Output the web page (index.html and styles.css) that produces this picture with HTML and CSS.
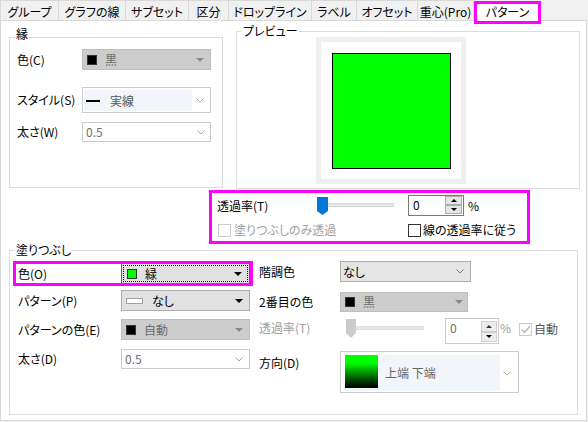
FILE: index.html
```html
<!DOCTYPE html>
<html lang="ja">
<head>
<meta charset="utf-8">
<link rel="stylesheet" href="styles.css">
</head>
<body>
<div class="tabs">
  <div class="tab">グループ</div>
  <div class="tab">グラフの線</div>
  <div class="tab">サブセット</div>
  <div class="tab">区分</div>
  <div class="tab">ドロップライン</div>
  <div class="tab">ラベル</div>
  <div class="tab">オフセット</div>
  <div class="tab">重心(Pro)</div>
  <div class="tab tab-active">パターン</div>
</div>
<div class="panel">
  <div class="top-row">
    <div class="group group-edge">
      <span class="legend legend-high">縁</span>
      <div class="row row-c">
        <span class="lbl">色(C)</span>
        <div class="dd dd-disabled dd-edge"><span class="sw sw-black"></span><span class="dd-text muted">黒</span><span class="tri tri-grey"></span></div>
      </div>
      <div class="row row-s">
        <span class="lbl">スタイル(S)</span>
        <div class="combo combo-style">
          <div class="combo-hl"><span class="line-sample"></span><span class="style-text">実線</span></div>
          <svg class="chev" width="8" height="5" viewBox="0 0 8 5"><path d="M0.5 0.5 L4 4 L7.5 0.5" fill="none" stroke="#a8a8a8"/></svg>
        </div>
      </div>
      <div class="row row-w">
        <span class="lbl">太さ(W)</span>
        <div class="combo combo-edge"><span class="muted">0.5</span>
          <svg class="chev" width="8" height="5" viewBox="0 0 8 5"><path d="M0.5 0.5 L4 4 L7.5 0.5" fill="none" stroke="#a8a8a8"/></svg>
        </div>
      </div>
    </div>
    <div class="group group-preview">
      <span class="legend">プレビュー</span>
      <div class="preview-frame"><div class="preview-fill"></div></div>
    </div>
  </div>

  <div class="trans-box">
    <div class="trans-row">
      <span class="trans-lbl">透過率(T)</span>
      <svg class="slider" width="77" height="21" viewBox="0 0 77 21">
        <rect x="0.5" y="8.5" width="76" height="3" fill="#e7e7e7" stroke="#d6d6d6"/>
        <path d="M0 2 H11 V16 L5.5 20 L0 16 Z" fill="#0078d7"/>
      </svg>
      <div class="spin">
        <span class="spin-val">0</span>
        <div class="spin-btns">
          <span class="spin-btn"><span class="arr-up"></span></span>
          <span class="spin-btn"><span class="arr-down"></span></span>
        </div>
      </div>
      <span class="pct">%</span>
    </div>
    <div class="check-row">
      <span class="check check-wide disabled"><span class="cb cb-disabled"></span><span class="check-text">塗りつぶしのみ透過</span></span>
      <span class="check"><span class="cb"></span><span class="check-text check-text-tight">線の透過率に従う</span></span>
    </div>
  </div>

  <div class="group group-fill">
    <span class="legend">塗りつぶし</span>
    <div class="fill-left">
      <div class="frow frow-color">
        <span class="flbl">色(O)</span>
        <div class="dd dd-focus">
          <div class="focus-rect"><span class="sw sw-green"></span><span class="dd-text">緑</span><span class="tri"></span></div>
        </div>
      </div>
      <div class="frow frow-pattern">
        <span class="flbl">パターン(P)</span>
        <div class="dd dd-fill"><span class="sw-pattern"></span><span class="dd-text pattern-text">なし</span><span class="tri"></span></div>
      </div>
      <div class="frow frow-pcolor">
        <span class="flbl">パターンの色(E)</span>
        <div class="dd dd-disabled dd-fill"><span class="sw sw-black"></span><span class="dd-text muted">自動</span><span class="tri tri-grey"></span></div>
      </div>
      <div class="frow frow-width">
        <span class="flbl">太さ(D)</span>
        <div class="combo combo-fill"><span class="muted">0.5</span>
          <svg class="chev" width="8" height="5" viewBox="0 0 8 5"><path d="M0.5 0.5 L4 4 L7.5 0.5" fill="none" stroke="#a8a8a8"/></svg>
        </div>
      </div>
    </div>
    <div class="fill-right">
      <div class="rrow rrow-grad">
        <span class="rlbl">階調色</span>
        <div class="dd dd-grad"><span class="dd-text grad-text">なし</span>
          <svg class="chev chev-grad" width="8" height="5" viewBox="0 0 8 5"><path d="M0.5 0.5 L4 4 L7.5 0.5" fill="none" stroke="#808080"/></svg>
        </div>
      </div>
      <div class="rrow rrow-second">
        <span class="rlbl">2番目の色</span>
        <div class="dd dd-disabled dd-second"><span class="sw sw-black"></span><span class="dd-text muted second-text">黒</span><span class="tri tri-grey"></span></div>
      </div>
      <div class="rrow rrow-trans">
        <span class="rlbl rlbl-trans disabled">透過率(T)</span>
        <svg class="slider slider-dis" width="78" height="20" viewBox="0 0 78 20">
          <rect x="0.5" y="7.5" width="77" height="3" fill="#e7e7e7" stroke="#dcdcdc"/>
          <path d="M0 0 H10 V14 L5 19 L0 14 Z" fill="#cccccc"/>
        </svg>
        <div class="spin spin-dis">
          <span class="spin-val muted">0</span>
          <div class="spin-btns">
            <span class="spin-btn"><span class="arr-up arr-grey"></span></span>
            <span class="spin-btn"><span class="arr-down"></span></span>
          </div>
        </div>
        <span class="pct pct-dis">%</span>
        <span class="cb cb-disabled cb-checked">
          <svg width="11" height="11" viewBox="0 0 11 11"><path d="M1.5 5.5 L4.5 8.5 L10 2" fill="none" stroke="#b4b4b4" stroke-width="1.2"/></svg>
        </span>
        <span class="auto-text">自動</span>
      </div>
      <div class="rrow rrow-dir">
        <span class="rlbl rlbl-dir">方向(D)</span>
        <div class="combo combo-dir">
          <div class="dir-hl"><span class="grad-sw"></span><span class="dir-text">上端 下端</span></div>
          <svg class="chev chev-dir" width="8" height="5" viewBox="0 0 8 5"><path d="M0.5 0.5 L4 4 L7.5 0.5" fill="none" stroke="#a8a8a8"/></svg>
        </div>
      </div>
    </div>
  </div>
</div>
</body>
</html>
```

FILE: styles.css
```css
* { box-sizing: border-box; }

body {
  margin: 0;
  width: 588px;
  height: 422px;
  overflow: hidden;
  background: #f0f0f0;
  font-family: "Noto Sans CJK JP", "Liberation Sans", sans-serif;
  font-size: 12px;
  line-height: 14px;
  color: #000;
  font-feature-settings: "palt" 1;
}

/* tabs */
.tabs {
  display: flex;
  height: 20px;
}
.tab {
  height: 20px;
  padding-top: 4px;
  border-top: 1px solid #d9d9d9;
  border-right: 1px solid #d9d9d9;
  background: #f0f0f0;
  text-align: center;
  white-space: nowrap;
}
.tab:nth-child(1) { width: 59px; border-left: 1px solid #d9d9d9; }
.tab:nth-child(2) { width: 67px; }
.tab:nth-child(3) { width: 63px; }
.tab:nth-child(4) { width: 40px; }
.tab:nth-child(5) { width: 83px; }
.tab:nth-child(6) { width: 45px; }
.tab:nth-child(7) { width: 61px; }
.tab:nth-child(8) { width: 56px; }
.tab-active {
  position: relative;
  z-index: 2;
  width: 67px;
  height: 23px;
  margin-top: 1px;
  padding-top: 1px;
  border: 3px solid #ff00ff;
  background: #fff;
}

/* main panel */
.panel {
  width: 587px;
  height: 401px;
  border: 1px solid #d9d9d9;
  background: #fff;
}

.top-row {
  display: flex;
  align-items: flex-start;
}

.group {
  position: relative;
  border: 1px solid #dcdcdc;
}
.legend {
  position: absolute;
  top: -8px;
  left: 5px;
  padding: 0 1px;
  background: #fff;
  white-space: nowrap;
}
.legend-high { top: -11px; }

.group-edge {
  margin-left: 8px;
  margin-top: 16px;
  width: 214px;
  height: 151px;
}
.group-preview {
  margin-left: 13px;
  margin-top: 10px;
  width: 344px;
  height: 158px;
}

.row {
  display: flex;
  align-items: center;
  padding-left: 7px;
}
.row-c { margin-top: 11px; height: 21px; }
.row-s { margin-top: 17px; height: 26px; }
.row-w { margin-top: 9px; height: 20px; }
.lbl { width: 65px; white-space: nowrap; }

/* dropdowns */
.dd {
  display: flex;
  align-items: center;
  height: 21px;
  border: 1px solid #adadad;
  background: #e1e1e1;
  padding-left: 4px;
}
.dd-disabled {
  background: #cccccc;
  border-color: #bfbfbf;
}
.dd-edge { width: 129px; }
.dd-text { margin-left: 8px; }
.muted { color: #6d6d6d; }
.disabled { color: #a0a0a0; }

.sw {
  width: 10px;
  height: 10px;
  flex: none;
}
.sw-black { background: #000; border: 1px solid #333; }
.sw-green { background: #00ff00; border: 1px solid #333; }
.sw-pattern {
  width: 17px;
  height: 6px;
  background: #fff;
  border: 1px solid #a0a0a0;
  flex: none;
}

.tri {
  margin-left: auto;
  margin-right: 6px;
  width: 0;
  height: 0;
  border-left: 4px solid transparent;
  border-right: 4px solid transparent;
  border-top: 4px solid #000;
}
.tri-grey { border-top-color: #8a8a8a; }

/* combos */
.combo {
  display: flex;
  align-items: center;
  border: 1px solid #cccccc;
  background: #fff;
}
.combo .chev { margin-left: auto; margin-right: 5px; flex: none; }
.combo-style {
  width: 129px;
  height: 26px;
  padding: 2px 1px 1px 1px;
  align-items: stretch;
}
.combo-style .chev { align-self: center; }
.combo-hl {
  width: 108px;
  display: flex;
  align-items: center;
  background: #f2f5fa;
}
.line-sample {
  width: 14px;
  height: 2px;
  margin-left: 2px;
  background: #000;
}
.style-text { margin-left: 10px; color: #555; }
.combo-edge {
  width: 129px;
  height: 20px;
  padding-left: 3px;
}

/* preview */
.preview-frame {
  margin-left: 79px;
  margin-top: 5px;
  width: 150px;
  height: 147px;
  border: 5px solid #efefef;
  padding: 11px 10px 10px 11px;
}
.preview-fill {
  width: 119px;
  height: 116px;
  background: #00ff00;
  border: 1px solid #000;
}

/* transparency box */
.trans-box {
  margin-left: 208px;
  margin-top: 1px;
  width: 321px;
  height: 54px;
  border: 3px solid #ff00ff;
}
.trans-row {
  display: flex;
  align-items: center;
  margin-top: 2px;
  height: 21px;
  padding-left: 5px;
}
.trans-lbl { width: 100px; }
.slider { flex: none; display: block; }

.spin {
  display: flex;
  margin-left: 14px;
  width: 56px;
  height: 21px;
  border: 1px solid #7a7a7a;
  background: #fff;
}
.spin-val {
  flex: 1;
  padding-left: 4px;
  line-height: 18px;
}
.spin-btns {
  display: flex;
  flex-direction: column;
  width: 17px;
  margin: 0 1px 1px 0;
}
.spin-btn {
  flex: 1;
  display: flex;
  align-items: center;
  justify-content: center;
  border: 1px solid #adadad;
  background: #e5e5e5;
}
.arr-up {
  width: 0; height: 0;
  border-left: 3px solid transparent;
  border-right: 3px solid transparent;
  border-bottom: 3px solid #000;
}
.arr-down {
  width: 0; height: 0;
  border-left: 3px solid transparent;
  border-right: 3px solid transparent;
  border-top: 3px solid #000;
}
.arr-grey { border-bottom-color: #333; }
.pct { margin-left: 4px; }

.check-row {
  display: flex;
  align-items: center;
  margin-top: 7px;
  height: 14px;
  padding-left: 6px;
}
.check { display: flex; align-items: center; }
.check-wide { width: 190px; }
.cb {
  width: 13px;
  height: 13px;
  border: 1px solid #333;
  background: #fff;
  flex: none;
}
.cb-disabled { border-color: #cccccc; }
.check-text { margin-left: 3px; }
.check-text-tight { margin-left: 2px; }

/* fill group */
.group-fill {
  display: flex;
  margin-left: 8px;
  margin-top: 6px;
  width: 569px;
  height: 165px;
}
.fill-left {
  width: 241px;
  padding-left: 5px;
  flex: none;
}
.frow {
  display: flex;
  align-items: center;
  width: 236px;
  padding-left: 3px;
}
.flbl { width: 103px; white-space: nowrap; }
.frow-color {
  margin-top: 12px;
  height: 21px;
  outline: 3px solid #ff00ff;
  outline-offset: -1px;
}
.frow-pattern { margin-top: 6px; height: 21px; }
.frow-pcolor { margin-top: 8px; height: 21px; }
.frow-width { margin-top: 9px; height: 20px; }

.dd-focus {
  width: 129px;
  border-color: #0078d7;
  background: #e1e1e1;
  padding: 1px;
}
.focus-rect {
  flex: 1;
  height: 17px;
  display: flex;
  align-items: center;
  border: 1px dotted #000;
  padding-left: 3px;
}
.focus-rect .tri { margin-right: 5px; }
.dd-fill { width: 129px; }
.pattern-text { margin-left: 9px; }
.combo-fill {
  width: 129px;
  height: 20px;
  padding-left: 3px;
}
.combo-fill .chev { margin-right: 6px; }

.fill-right {
  margin-left: 8px;
  width: 310px;
}
.rrow {
  display: flex;
  align-items: center;
}
.rlbl { width: 81px; white-space: nowrap; flex: none; }
.rrow-grad { margin-top: 10px; height: 21px; }
.rrow-second { margin-top: 10px; height: 20px; }
.rrow-trans { margin-top: 6px; height: 26px; }
.rrow-dir { margin-top: 7px; height: 42px; align-items: flex-start; }

.dd-grad {
  width: 131px;
  background: #e5e5e5;
  padding-left: 2px;
}
.grad-text { margin-left: 0; }
.dd .chev-grad { margin-left: auto; margin-right: 6px; }
.dd-second {
  width: 128px;
  height: 20px;
}
.second-text { margin-left: 8px; }
.dd-second .tri { margin-right: 4px; }

.rlbl-trans {
  width: 87px;
  align-self: flex-start;
  margin-top: 3px;
}
.slider-dis { align-self: flex-start; margin-top: 1px; }
.spin-dis {
  margin-left: 21px;
  width: 54px;
  height: 26px;
  border-color: #cccccc;
}
.spin-dis .spin-val { line-height: 18px; padding-left: 4px; }
.spin-dis .spin-btns { width: 16px; margin: 2px 1px 1px 0; }
.spin-dis .spin-btn { border-color: #cfcfcf; background: #ececec; }
.pct-dis {
  margin-left: 1px;
  width: 12px;
  color: #a0a0a0;
  align-self: flex-start;
  margin-top: 3px;
}
.cb-checked {
  margin-left: 7px;
  display: flex;
  align-items: center;
  justify-content: center;
  margin-bottom: 4px;
}
.auto-text { margin-left: 2px; color: #555; margin-bottom: 4px; }

.rlbl-dir { margin-top: 5px; }
.combo-dir {
  width: 179px;
  height: 42px;
  padding: 3px 4px 1px 4px;
  align-items: flex-start;
}
.dir-hl {
  display: flex;
  align-items: center;
  width: 155px;
  height: 36px;
  background: #f2f5fa;
  align-items: flex-start;
}
.grad-sw {
  width: 33px;
  height: 33px;
  flex: none;
  background: linear-gradient(#00ff00 0%, #00ff00 25%, #008c00 55%, #002800 85%, #000 100%);
}
.dir-text {
  margin-left: 7px;
  margin-top: 11px;
  color: #666;
}
.combo-dir .chev-dir { align-self: center; margin-right: 3px; }
```
